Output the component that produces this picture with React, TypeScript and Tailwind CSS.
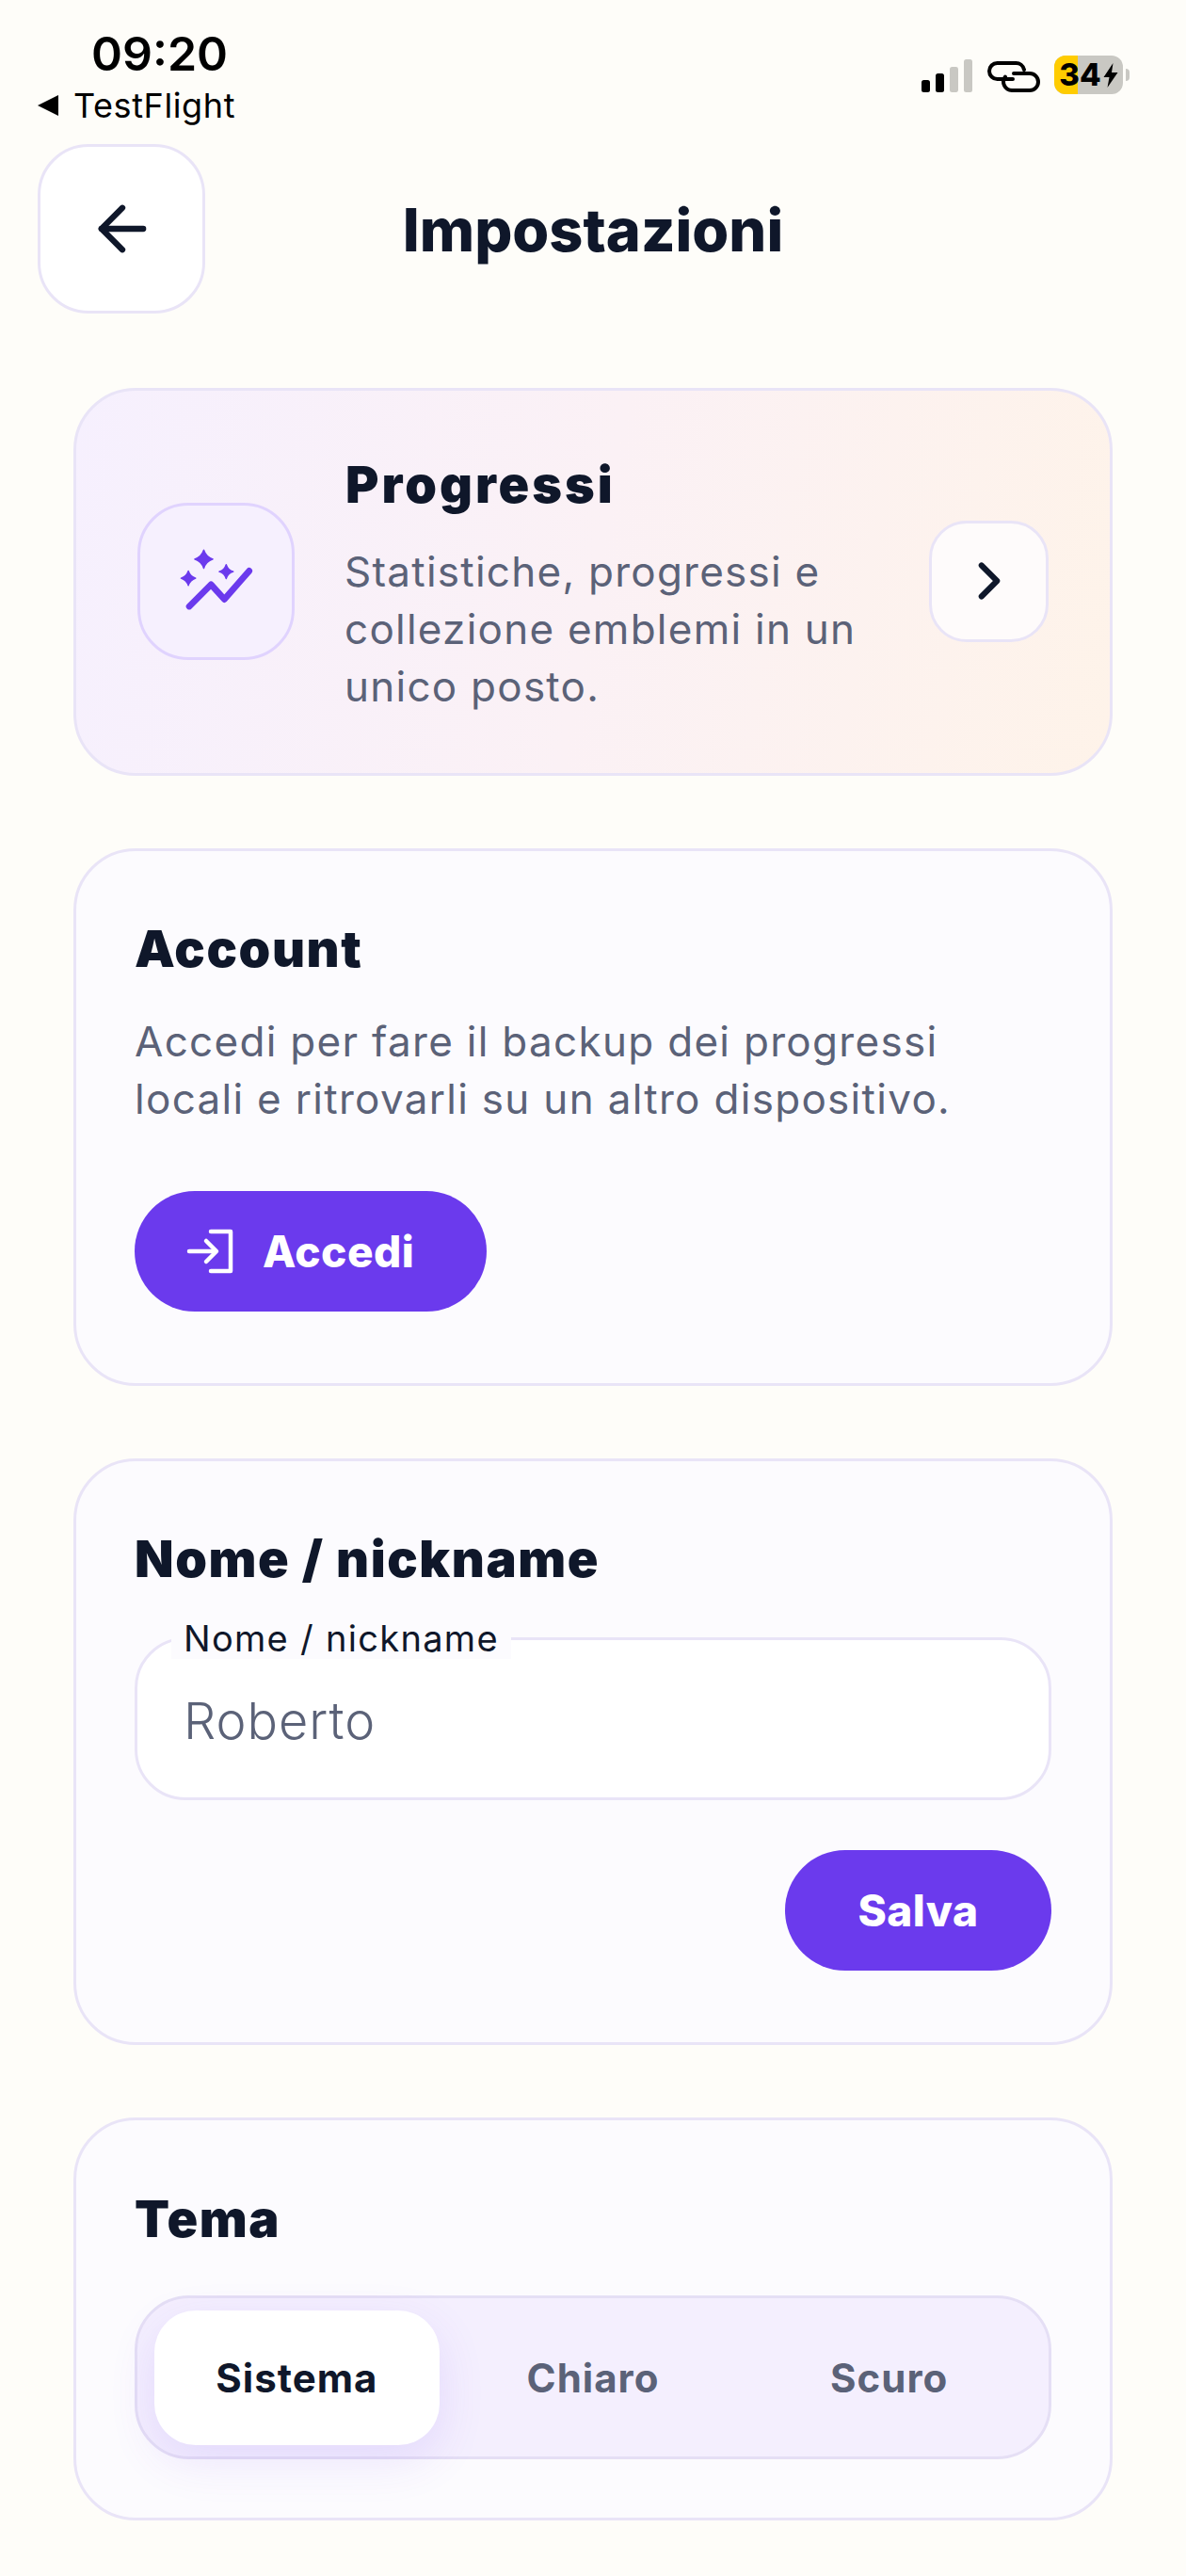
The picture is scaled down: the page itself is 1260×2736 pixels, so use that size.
import { ArrowLeft, ChevronRight } from "lucide-react";

function SignalIcon() {
  return (
    <svg width="56" height="38" viewBox="0 0 56 38" className="block">
      <rect x="1" y="23" width="9" height="13" rx="2.5" fill="#000" />
      <rect x="16" y="16" width="9" height="20" rx="2.5" fill="#000" />
      <rect x="31" y="9" width="9" height="27" rx="2.5" fill="#c9c8c3" />
      <rect x="46" y="1" width="9" height="35" rx="2.5" fill="#c9c8c3" />
    </svg>
  );
}

function LinkIcon() {
  return (
    <svg width="56" height="33" viewBox="0 0 56 33" fill="none" stroke="#000" strokeWidth="4" strokeLinecap="round" className="mb-[2px] block">
      <path d="M27 19H10.5A8.5 8.5 0 0 1 10.5 2H30A9 9 0 0 1 39 9" />
      <path d="M19 16.5A9 9 0 0 0 26 31H45A9 9 0 0 0 45 13H28" />
    </svg>
  );
}

function Battery() {
  return (
    <div className="flex items-center gap-[3px]">
      <div className="relative flex h-[41px] w-[73px] items-center justify-center gap-[2px] overflow-hidden rounded-[12px] bg-[#c9c8c3]">
        <div className="absolute inset-y-0 left-0 w-[25px] bg-[#ffcc00]" />
        <span className="relative text-[33px] leading-none font-extrabold text-black">34</span>
        <svg width="16" height="26" viewBox="0 0 15 26" className="relative">
          <path d="M10 0 L0 15 H6 L4 26 L15 10 H8.5 Z" fill="#000" />
        </svg>
      </div>
      <div className="h-[13px] w-[4px] rounded-r-full bg-[#c9c8c3]" />
    </div>
  );
}

function StatusBar() {
  return (
    <div className="flex h-[153px] items-start justify-between pr-[60px] pl-[40px]">
      <div className="flex flex-col items-start">
        <span className="mt-[29px] ml-[57px] text-[50px] leading-[56px] font-semibold text-black">09:20</span>
        <div className="mt-[6px] flex items-center gap-[16px] text-[36px] leading-[42px] tracking-[0.6px] text-black">
          <span className="h-0 w-0 border-y-[11px] border-r-[22px] border-y-transparent border-r-black" />
          <span>TestFlight</span>
        </div>
      </div>
      <div className="mt-[59px] flex items-end gap-[15px]">
        <SignalIcon />
        <LinkIcon />
        <Battery />
      </div>
    </div>
  );
}

function ProgressIcon() {
  return (
    <svg width="167" height="167" viewBox="0 0 167 167" fill="#6b3aed" stroke="#6b3aed" strokeLinejoin="round">
      <path d="M70 49 Q72.5 56.5 80 59 Q72.5 61.5 70 69 Q67.5 61.5 60 59 Q67.5 56.5 70 49Z" strokeWidth="1.5" />
      <path d="M94.7 65 Q96.5 71 102.5 72.7 Q96.5 74.5 94.7 80.5 Q93 74.5 87 72.7 Q93 71 94.7 65Z" strokeWidth="1.5" />
      <path d="M53 72 Q55 78 61 80 Q55 82 53 88 Q51 82 45 80 Q51 78 53 72Z" strokeWidth="1.5" />
      <path d="M54 111 L78 87 L92.7 103.3 L120 72" fill="none" strokeWidth="7" strokeLinecap="round" />
    </svg>
  );
}

function LoginIcon() {
  return (
    <svg width="50" height="48" viewBox="0 0 50 48" fill="none" stroke="#fff" strokeWidth="4.5" strokeLinecap="round" strokeLinejoin="round">
      <path d="M26 3H47V45H26" />
      <path d="M3 24H31" />
      <path d="M21 13L32 24L21 35" />
    </svg>
  );
}

function PrimaryButton({ children, className }: { children: React.ReactNode; className?: string }) {
  return (
    <button className={"flex h-[128px] items-center rounded-[64px] bg-[#6b3aed] text-[46px] font-extrabold tracking-[0.4px] text-white " + className}>
      {children}
    </button>
  );
}

function SectionTitle({ children }: { children: React.ReactNode }) {
  return <h2 className="text-[54px] leading-[64px] font-black tracking-[1.6px] text-[#0f172a]">{children}</h2>;
}

function ThemeTabs() {
  return (
    <div className="mt-[49px] grid h-[174px] grid-cols-3 items-center gap-[12px] rounded-[58px] border-[3px] border-[#e5dff5] bg-[#f4effe] px-[18px]">
      <div className="flex h-[143px] items-center justify-center rounded-[44px] bg-white text-[42px] font-bold tracking-[1px] text-[#0f172a] shadow-[0_16px_50px_rgba(107,58,237,0.12)]">
        Sistema
      </div>
      <div className="flex h-[143px] items-center justify-center text-[42px] font-bold tracking-[1px] text-[#5b6278]">Chiaro</div>
      <div className="flex h-[143px] items-center justify-center text-[42px] font-bold tracking-[1px] text-[#5b6278]">Scuro</div>
    </div>
  );
}

export default function App() {
  return (
    <div className="h-[2736px] overflow-hidden bg-[#fefdf9] font-['Inter',sans-serif]">
      <StatusBar />

      <header className="grid grid-cols-[178px_1fr_178px] items-center px-[40px]">
        <button className="flex h-[180px] items-center justify-center rounded-[54px] border-[3px] border-[#e9e4f7] bg-white pl-[2px] text-[#0f172a]">
          <ArrowLeft size={76} strokeWidth={2} />
        </button>
        <h1 className="pt-[2px] text-center text-[63px] font-extrabold text-[#0f172a]">Impostazioni</h1>
      </header>

      <main className="mt-[79px] flex flex-col gap-[77px] px-[78px]">
        <section className="flex h-[412px] items-center rounded-[66px] border-[3px] border-[#e9e4f7] bg-linear-[100deg] from-[#f6f0fe] via-[#fbf1f5] to-[#fef3e9] pr-[65px] pb-[2px] pl-[65px]">
          <div className="flex h-[167px] w-[167px] shrink-0 items-center justify-center rounded-[54px] border-[3px] border-[#e0d3fe] bg-[#f6f0fe]">
            <ProgressIcon />
          </div>
          <div className="ml-[53px] flex-1">
            <h2 className="mt-[9px] pl-[1px] text-[54px] leading-[64px] font-black tracking-[3px] text-[#0f172a]">Progressi</h2>
            <p className="mt-[30px] text-[44px] leading-[61px] tracking-[1.25px] text-[#5b6278]">
              Statistiche, progressi e
              <br />
              collezione emblemi in un
              <br />
              unico posto.
            </p>
          </div>
          <button className="flex h-[129px] w-[127px] shrink-0 items-center justify-center rounded-[40px] border-[3px] border-[#e9e4f7] bg-[#fefbfb] text-[#0f172a]">
            <ChevronRight size={66} strokeWidth={2.2} />
          </button>
        </section>

        <section className="h-[571px] rounded-[66px] border-[3px] border-[#e9e4f7] bg-[#fcfbfe] px-[62px] pt-[72px]">
          <SectionTitle>Account</SectionTitle>
          <p className="mt-[36px] text-[44px] leading-[61px] tracking-[1.3px] text-[#5b6278]">
            Accedi per fare il backup dei progressi
            <br />
            locali e ritrovarli su un altro dispositivo.
          </p>
          <PrimaryButton className="mt-[67px] w-[374px] gap-[31px] pl-[55px]">
            <LoginIcon />
            <span>Accedi</span>
          </PrimaryButton>
        </section>

        <section className="h-[623px] rounded-[66px] border-[3px] border-[#e9e4f7] bg-[#fcfbfe] px-[62px] pt-[72px]">
          <SectionTitle>Nome / nickname</SectionTitle>
          <div className="relative mt-[51px] flex h-[173px] items-center rounded-[54px] border-[3px] border-[#e9e4f7] bg-white px-[49px] pt-[4px]">
            <span className="absolute top-[-24px] left-[36px] bg-[#fcfbfe] px-[13px] text-[38px] leading-[44px] tracking-[1.3px] text-[#0f172a]">
              Nome / nickname
            </span>
            <span className="text-[54px] font-[350] tracking-[1px] text-[#5b6278]">Roberto</span>
          </div>
          <div className="mt-[53px] flex justify-end">
            <PrimaryButton className="w-[283px] justify-center">Salva</PrimaryButton>
          </div>
        </section>

        <section className="h-[428px] rounded-[66px] border-[3px] border-[#e9e4f7] bg-[#fcfbfe] px-[62px] pt-[73px]">
          <SectionTitle>Tema</SectionTitle>
          <ThemeTabs />
        </section>
      </main>
    </div>
  );
}
